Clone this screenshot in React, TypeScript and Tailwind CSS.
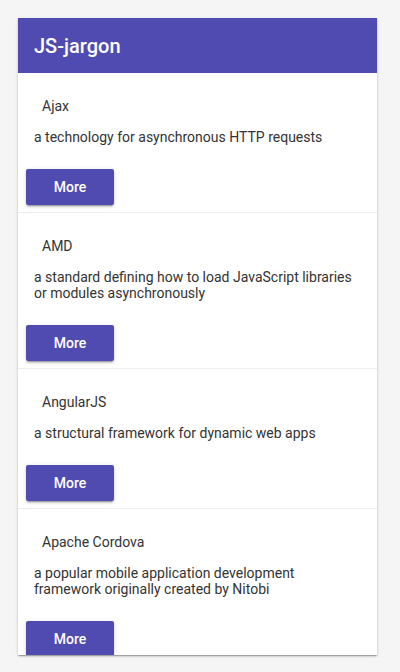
import React from 'react';

const terms = [
    { name: 'Ajax', text: 'a technology for asynchronous HTTP requests' },
    { name: 'AMD', text: 'a standard defining how to load JavaScript libraries or modules asynchronously' },
    { name: 'AngularJS', text: 'a structural framework for dynamic web apps' },
    { name: 'Apache Cordova', text: 'a popular mobile application development framework originally created by Nitobi' },
];

const App = () => {
    return (
        <div className="min-h-[672px] w-[400px] bg-[#f5f5f5] pt-[18px] font-['Roboto',sans-serif]">
            <div className="ml-[18px] h-[637px] w-[359px] overflow-hidden bg-white shadow-[0_1px_3px_rgba(0,0,0,0.2),0_1px_1px_rgba(0,0,0,0.14),0_2px_1px_-1px_rgba(0,0,0,0.12)]">
                <div className="flex h-[55px] items-center bg-[#504bb0] px-4">
                    <h1 className="text-[20px] font-medium leading-none text-white">JS-jargon</h1>
                </div>

                {terms.map((t) => (
                    <div key={t.name} className="border-b border-[#eeeeee] pt-[25px] pb-[7px]">
                        <div className="px-4">
                            <div className="pl-2 text-[14px] leading-[16px] text-[#333333]">{t.name}</div>
                            <p className="mt-[15px] pr-2 text-[14px] leading-[16px] text-[#333333]">{t.text}</p>
                        </div>
                        <div className="mt-6 px-2">
                            <button className="h-[36px] w-[88px] rounded-[2px] bg-[#504bb0] text-[14px] font-medium text-white shadow-[0_2px_2px_rgba(0,0,0,0.14),0_1px_5px_rgba(0,0,0,0.12),0_3px_1px_-2px_rgba(0,0,0,0.2)]">
                                More
                            </button>
                        </div>
                    </div>
                ))}
            </div>
        </div>
    );
};

export default App;
